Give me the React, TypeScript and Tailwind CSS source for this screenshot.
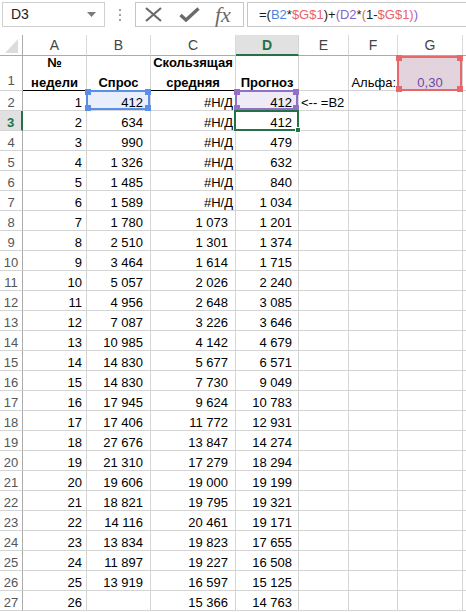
import React from 'react';

// Excel-like sheet: exponential smoothing forecast
type Row = [string, string, string, string];

const data: Row[] = [
  ['1', '412', '#Н/Д', '412'],
  ['2', '634', '#Н/Д', '412'],
  ['3', '990', '#Н/Д', '479'],
  ['4', '1 326', '#Н/Д', '632'],
  ['5', '1 485', '#Н/Д', '840'],
  ['6', '1 589', '#Н/Д', '1 034'],
  ['7', '1 780', '1 073', '1 201'],
  ['8', '2 510', '1 301', '1 374'],
  ['9', '3 464', '1 614', '1 715'],
  ['10', '5 057', '2 026', '2 240'],
  ['11', '4 956', '2 648', '3 085'],
  ['12', '7 087', '3 226', '3 646'],
  ['13', '10 985', '4 142', '4 679'],
  ['14', '14 830', '5 677', '6 571'],
  ['15', '14 830', '7 730', '9 049'],
  ['16', '17 945', '9 624', '10 783'],
  ['17', '17 406', '11 772', '12 931'],
  ['18', '27 676', '13 847', '14 274'],
  ['19', '21 310', '17 279', '18 294'],
  ['20', '19 606', '19 000', '19 199'],
  ['21', '18 821', '19 795', '19 321'],
  ['22', '14 116', '20 461', '19 171'],
  ['23', '13 834', '19 823', '17 655'],
  ['24', '11 897', '19 227', '16 508'],
  ['25', '13 919', '16 597', '15 125'],
  ['26', '', '15 366', '14 763'],
];

const cols = ['A', 'B', 'C', 'D', 'E', 'F', 'G'];

const gridCols = 'grid grid-cols-[23px_64px_64px_85px_63px_50px_49px_65px_1fr]';

const Handles = ({ color }: { color: string }) => (
  <>
    <span className={`absolute -left-[3px] -top-[3px] h-[6px] w-[6px] ${color}`} />
    <span className={`absolute -right-[3px] -top-[3px] h-[6px] w-[6px] ${color}`} />
    <span className={`absolute -bottom-[3px] -left-[3px] h-[6px] w-[6px] ${color}`} />
    <span className={`absolute -bottom-[3px] -right-[3px] h-[6px] w-[6px] ${color}`} />
  </>
);

const Cell = ({ children, className = '' }: { children?: React.ReactNode; className?: string }) => (
  <div className={`relative flex h-[20px] items-end border-b border-r border-[#d4d4d4] pb-[1px] leading-[12px] whitespace-nowrap ${className}`}>
    {children}
  </div>
);

function FormulaBar() {
  return (
    <div className="flex h-[35px] items-start bg-white pt-[2px]">
      <div className="ml-[2px] flex h-[25px] w-[103px] items-center justify-between border border-[#d0d0d0] pl-[8px] pr-[8px] text-[14px] text-[#222]">
        <span>D3</span>
        <svg width="9" height="5" viewBox="0 0 9 5">
          <polygon points="0,0 9,0 4.5,5" fill="#7a7a7a" />
        </svg>
      </div>
      <div className="flex h-[25px] w-[30px] flex-col items-center justify-center gap-[3px]">
        <span className="h-[2px] w-[2px] bg-[#a0a0a0]" />
        <span className="h-[2px] w-[2px] bg-[#a0a0a0]" />
        <span className="h-[2px] w-[2px] bg-[#a0a0a0]" />
      </div>
      <div className="flex h-[25px] w-[109px] items-center border border-[#c6c6c6]">
        <svg className="ml-[8px]" width="19" height="15" viewBox="0 0 19 15">
          <path d="M2 1 L17 14 M17 1 L2 14" stroke="#6b6b6b" strokeWidth="2.2" />
        </svg>
        <svg className="ml-[16px]" width="21" height="15" viewBox="0 0 21 15">
          <path d="M1.5 8 L7 13 L19.5 1.5" stroke="#6b6b6b" strokeWidth="3.4" fill="none" />
        </svg>
        <span className="ml-[15px] font-[family-name:Liberation_Serif,serif] text-[22px] italic leading-none text-[#6b6b6b]">
          fx
        </span>
      </div>
      <div className="ml-[3px] flex h-[25px] flex-1 items-center border border-r-0 border-[#c6c6c6] pl-[11px] text-[13px] text-[#1a1a1a]">
        <span>=(</span>
        <span className="text-[#4f84dc]">B2</span>
        <span>*</span>
        <span className="text-[#e8636a]">$G$1</span>
        <span>)+</span>
        <span className="text-[#8c5fcf]">(</span>
        <span className="text-[#8c5fcf]">D2</span>
        <span>*</span>
        <span className="text-[#e8636a]">(</span>
        <span>1-</span>
        <span className="text-[#e8636a]">$G$1)</span>
        <span className="text-[#8c5fcf]">)</span>
      </div>
    </div>
  );
}

function HeaderRow() {
  return (
    <>
      <div className="relative h-[21px] border-b border-r border-[#ababab] bg-white">
        <svg className="absolute left-0 top-0" width="22" height="20" viewBox="0 0 22 20">
          <polygon points="18,4 18,18 5,18" fill="#dcdcdc" />
        </svg>
      </div>
      {cols.map((c) =>
        c === 'D' ? (
          <div
            key={c}
            className="flex h-[21px] items-center justify-center border-b-2 border-r border-b-[#217346] border-r-[#d4d4d4] bg-[#e1e1e1] pt-[1px] text-[14px] font-bold text-[#217346]"
          >
            {c}
          </div>
        ) : (
          <div
            key={c}
            className="flex h-[21px] items-center justify-center border-b border-r border-b-[#ababab] border-r-[#dadada] bg-white pt-[1px] text-[14px] text-[#444]"
          >
            {c}
          </div>
        )
      )}
      <div className="h-[21px] border-b border-[#ababab] bg-white" />
    </>
  );
}

function RowHead({ n, tall = false }: { n: number; tall?: boolean }) {
  const active = n === 3;
  return (
    <div
      className={`flex items-end justify-center border-b border-b-[#d4d4d4] leading-[12px] ${tall ? 'h-[35px] pb-[3px]' : 'h-[20px] pb-[1px]'} ${
        active
          ? 'border-r-2 border-r-[#217346] bg-[#e1e1e1] font-bold text-[#217346]'
          : 'border-r border-r-[#ababab] bg-white text-[#555]'
      }`}
    >
      {n}
    </div>
  );
}

export default function App() {
  return (
    <div className="h-[612px] w-[466px] overflow-hidden bg-white font-[family-name:Liberation_Sans,Arial,sans-serif] text-[13px] text-black">
      <FormulaBar />
      <div className={gridCols}>
        <HeaderRow />

        {/* row 1: headings */}
        <RowHead n={1} tall />
        <div className="flex h-[35px] items-end justify-center border-b border-r border-b-black border-r-[#d4d4d4] text-center font-bold leading-[20px]">
          <span className="-mb-[3px]">
            №<br />
            недели
          </span>
        </div>
        <div className="flex h-[35px] items-end justify-center border-b border-r border-b-black border-r-[#d4d4d4] font-bold leading-[20px]">
          <span className="-mb-[3px]">Спрос</span>
        </div>
        <div className="flex h-[35px] items-end justify-center border-b border-r border-b-black border-r-[#d4d4d4] text-center font-bold leading-[20px]">
          <span className="-mb-[3px]">
            Скользящая
            <br />
            средняя
          </span>
        </div>
        <div className="flex h-[35px] items-end justify-center border-b border-r border-b-black border-r-[#d4d4d4] font-bold leading-[20px]">
          <span className="-mb-[3px]">Прогноз</span>
        </div>
        <div className="h-[35px] border-b border-r border-[#d4d4d4]" />
        <div className="flex h-[35px] items-end justify-end border-b border-r border-[#d4d4d4] pr-[1px] leading-[20px]">
          <span className="-mb-[3px]">Альфа:</span>
        </div>
        <div className="relative flex h-[35px] items-end justify-center border-b border-r border-[#d4d4d4] bg-[#e3d3dc] leading-[20px] text-[#6a4aa8]">
          <span className="-mb-[3px]">0,30</span>
          <div className="absolute -left-[1px] top-0 -bottom-[1px] right-0 z-10 border-2 border-[#e8676b]">
            <Handles color="bg-[#e8676b]" />
          </div>
        </div>
        <div className="h-[35px] border-b border-[#d4d4d4]" />

        {data.map((r, i) => {
          const n = i + 2;
          return (
            <React.Fragment key={n}>
              <RowHead n={n} />
              <Cell className="justify-end pr-[4px]">{r[0]}</Cell>
              <Cell className={`justify-end pr-[7px] ${n === 2 ? 'bg-[#e8eefb]' : ''}`}>
                {r[1]}
                {n === 2 && (
                  <div className="absolute -left-[1px] -top-[1px] bottom-0 right-0 z-10 border-2 border-[#5b8ee6]">
                    <Handles color="bg-[#5b8ee6]" />
                  </div>
                )}
              </Cell>
              <Cell className={`justify-end ${r[2] === '#Н/Д' ? 'pr-[2px]' : 'pr-[7px]'}`}>{r[2]}</Cell>
              <Cell className={`justify-end pr-[6px] ${n === 2 ? 'bg-[#eeeaf6]' : ''}`}>
                {r[3]}
                {n === 2 && (
                  <div className="absolute -left-[1px] -top-[1px] bottom-0 right-0 z-10 border-2 border-[#9370c8]">
                    <Handles color="bg-[#9370c8]" />
                  </div>
                )}
                {n === 3 && (
                  <div className="absolute -left-[2px] -top-[1px] -bottom-[1px] -right-[1px] z-20 border-2 border-[#217346]">
                    <span className="absolute -bottom-[4px] -right-[4px] h-[6px] w-[6px] border border-white bg-[#217346]" />
                  </div>
                )}
              </Cell>
              <Cell className="justify-start pl-[2px]">
                {n === 2 && <span className="relative z-0">{'<-- =B2'}</span>}
              </Cell>
              <Cell />
              <Cell />
              <div className="h-[20px] border-b border-[#d4d4d4]" />
            </React.Fragment>
          );
        })}
      </div>
    </div>
  );
}
